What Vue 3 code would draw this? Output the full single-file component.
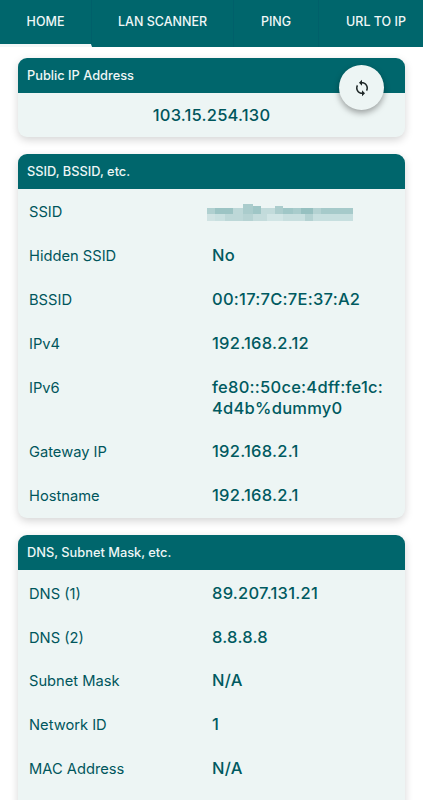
<script setup>
const tabs = [
  { label: 'HOME', width: 92 },
  { label: 'LAN SCANNER', width: 142 },
  { label: 'PING', width: 85 },
  { label: 'URL TO IP', width: 114 }
]
const wifi = [
  { k: 'SSID', blur: true },
  { k: 'Hidden SSID', v: ['No'] },
  { k: 'BSSID', v: ['00:17:7C:7E:37:A2'] },
  { k: 'IPv4', v: ['192.168.2.12'] },
  { k: 'IPv6', v: ['fe80::50ce:4dff:fe1c:', '4d4b%dummy0'] },
  { k: 'Gateway IP', v: ['192.168.2.1'] },
  { k: 'Hostname', v: ['192.168.2.1'] }
]
const dns = [
  { k: 'DNS (1)', v: ['89.207.131.21'] },
  { k: 'DNS (2)', v: ['8.8.8.8'] },
  { k: 'Subnet Mask', v: ['N/A'] },
  { k: 'Network ID', v: ['1'] },
  { k: 'MAC Address', v: ['N/A'] }
]
const blur = [
  [0, 6, 8, 6, '#b0d0d0'], [8, 6, 18, 6, '#9cc4c4'], [26, 6, 10, 6, '#bdd8d8'], [36, 2, 10, 10, '#aacccc'],
  [46, 4, 8, 8, '#9fc6c6'], [54, 6, 14, 6, '#c2dbdb'], [68, 4, 8, 8, '#accdcd'], [76, 6, 10, 6, '#a0c7c7'],
  [86, 6, 8, 6, '#a9cccc'], [94, 6, 12, 6, '#96c0c0'], [106, 6, 8, 6, '#b4d2d2'], [114, 6, 32, 6, '#a6caca'],
  [0, 12, 8, 7, '#d0e3e3'], [8, 12, 10, 7, '#c9e0e0'], [18, 12, 18, 7, '#bdd8d8'], [36, 12, 10, 7, '#b6d3d3'],
  [46, 12, 14, 7, '#c4dcdc'], [60, 12, 16, 7, '#d1e5e5'], [76, 12, 22, 7, '#c8dfdf'], [98, 12, 8, 7, '#b4d2d2'],
  [106, 12, 40, 7, '#c7dfdf']
]
</script>

<template>
  <div class="page">
    <nav class="tabs">
      <div v-for="(t, i) in tabs" :key="t.label" class="tab" :class="{ active: i === 0 }" :style="{ width: t.width + 'px' }">{{ t.label }}</div>
    </nav>

    <section class="card first">
      <header class="head">Public IP Address</header>
      <div class="ip">103.15.254.130</div>
      <button class="fab" aria-label="Refresh">
        <svg width="24" height="24" viewBox="0 0 24 24" fill="#1d2626"><path d="M12 4V1L8 5l4 4V6c3.31 0 6 2.69 6 6 0 1.01-.25 1.97-.7 2.8l1.46 1.46C19.54 15.03 20 13.57 20 12c0-4.42-3.58-8-8-8zm0 14c-3.31 0-6-2.69-6-6 0-1.01.25-1.97.7-2.8L5.24 7.74C4.46 8.97 4 10.43 4 12c0 4.42 3.58 8 8 8v3l4-4-4-4v3z"/></svg>
      </button>
    </section>

    <section class="card">
      <header class="head">SSID, BSSID, etc.</header>
      <div class="rows">
        <div v-for="r in wifi" :key="r.k" class="row">
          <div class="key">{{ r.k }}</div>
          <div class="val">
            <svg v-if="r.blur" class="blur" width="146" height="19" viewBox="0 0 146 19">
              <rect v-for="(b, i) in blur" :key="i" :x="b[0]" :y="b[1]" :width="b[2]" :height="b[3]" :fill="b[4]" />
            </svg>
            <div v-for="l in r.v" :key="l">{{ l }}</div>
          </div>
        </div>
      </div>
    </section>

    <section class="card last">
      <header class="head">DNS, Subnet Mask, etc.</header>
      <div class="rows">
        <div v-for="r in dns" :key="r.k" class="row">
          <div class="key">{{ r.k }}</div>
          <div class="val"><div v-for="l in r.v" :key="l">{{ l }}</div></div>
        </div>
      </div>
    </section>
  </div>
</template>

<style>
html, body { margin: 0; background: #fff; overflow: hidden; }
</style>

<style scoped>
.page {
  width: 423px;
  height: 800px;
  overflow: hidden;
  font-family: Inter, "Open Sans", sans-serif;
  background: #fff;
}
.tabs {
  display: flex;
  height: 47px;
  background: #00666c;
}
.tab {
  flex: none;
  box-sizing: border-box;
  height: 47px;
  padding-bottom: 5px;
  display: flex;
  align-items: center;
  justify-content: center;
  color: #f0f7f7;
  font-size: 12.5px;
  font-weight: 500;
  white-space: nowrap;
  border-right: 1px solid #00606a;
}
.tab:last-child { border-right: 0; }
.tab.active { border-bottom: 3px solid #f2f7f7; padding-bottom: 2px; }
.card {
  position: relative;
  margin: 17px 18px 0;
  width: 387px;
  background: #edf5f4;
  border-radius: 9px;
  box-shadow: 0 3px 8px rgba(0, 0, 0, .17);
}
.first { margin-top: 11px; height: 79px; }
.last { padding-bottom: 40px; }
.head {
  height: 35px;
  box-sizing: border-box;
  padding: 0 9px;
  display: flex;
  align-items: center;
  background: #00666c;
  color: #eef6f6;
  font-size: 12.8px;
  font-weight: 500;
  border-radius: 9px 9px 0 0;
}
.ip {
  text-align: center;
  color: #00565c;
  font-size: 16.5px;
  letter-spacing: .2px;
  font-weight: 500;
  line-height: 44px;
}
.fab {
  position: absolute;
  top: 7px;
  right: 21px;
  width: 45px;
  height: 45px;
  padding: 0;
  border: 0;
  border-radius: 50%;
  background: #edf5f4;
  box-shadow: 0 3px 6px rgba(0, 0, 0, .35);
  display: flex;
  align-items: center;
  justify-content: center;
}
.fab svg { width: 18px; height: 18px; }
.rows { padding: 1px 0 1px; }
.row {
  display: flex;
  padding: 11.4px 11px;
  line-height: 21px;
}
.key {
  width: 183px;
  flex: none;
  margin: 1px 0 -1px;
  color: #00565c;
  font-size: 14.7px;
}
.val {
  color: #005a60;
  font-size: 16.5px;
  letter-spacing: .25px;
  font-weight: 500;
  white-space: nowrap;
  min-height: 21px;
  position: relative;
}
.blur { position: absolute; left: -5px; top: 1px; }
</style>
